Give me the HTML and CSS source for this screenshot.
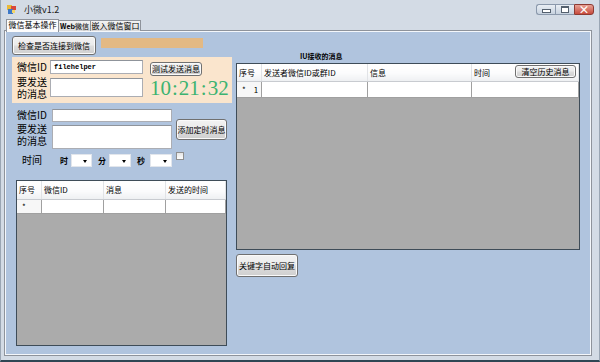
FILE: index.html
```html
<!DOCTYPE html>
<html lang="zh-CN">
<head>
    <meta charset="UTF-8">
    <title>小微v1.2</title>
    <link rel="stylesheet" href="styles.css">
</head>
<body>
    <div class="window">
        <div class="titlebar">
            <svg class="app-icon" width="9" height="9" viewBox="0 0 9 9">
                <rect x="0" y="0" width="5" height="5" fill="#e9b93a"/>
                <rect x="4" y="1" width="5" height="4" fill="#d9483b"/>
                <rect x="1" y="4" width="5" height="5" fill="#3c78c8"/>
                <rect x="5" y="5" width="3" height="3" fill="#f2d46a"/>
            </svg>
            <span class="title">小微v1.2</span>
            <div class="controls">
                <span class="ctl ctl-min"><i></i></span>
                <span class="ctl ctl-max"><i></i></span>
                <span class="ctl ctl-close">×</span>
            </div>
        </div>

        <div class="tabs">
            <span class="tab tab-active">微信基本操作</span>
            <span class="tab tab-web"><b>Web</b>微信</span>
            <span class="tab tab-embed">嵌入微信窗口</span>
        </div>

        <div class="page">
            <div class="left">
                <div class="toolbar">
                    <button class="btn btn-check">检查是否连接到微信</button>
                    <div class="progress"></div>
                </div>

                <div class="send-panel">
                    <label class="lbl lbl-id">微信ID</label>
                    <div class="txt txt-mono">filehelper</div>
                    <button class="btn btn-test">测试发送消息</button>
                    <label class="lbl lbl-multi">要发送<br>的消息</label>
                    <div class="txt txt-msg"></div>
                    <div class="clock">10<span class="colon">:</span>21<span class="colon">:</span>32</div>
                </div>

                <div class="timer-form">
                    <label class="lbl lbl-id">微信ID</label>
                    <div class="txt txt-id"></div>
                    <button class="btn btn-add">添加定时消息</button>
                    <label class="lbl lbl-multi">要发送<br>的消息</label>
                    <div class="txt txt-msg"></div>
                </div>

                <div class="time-row">
                    <span class="lbl lbl-time">时间</span>
                    <span class="unit">时</span>
                    <span class="combo combo-h"></span>
                    <span class="unit">分</span>
                    <span class="combo"></span>
                    <span class="unit">秒</span>
                    <span class="combo combo-s"></span>
                    <span class="check"></span>
                </div>

                <div class="grid grid-left">
                    <table>
                        <tr class="head">
                            <th class="c-no">序号</th>
                            <th class="c-id">微信ID</th>
                            <th class="c-msg">消息</th>
                            <th>发送的时间</th>
                        </tr>
                        <tr class="row">
                            <td class="rowhead">*</td>
                            <td></td>
                            <td></td>
                            <td></td>
                        </tr>
                    </table>
                </div>
            </div>

            <div class="right">
                <div class="caption">IU接收的消息</div>
                <div class="grid grid-right">
                    <table>
                        <tr class="head">
                            <th class="c-no2">序号</th>
                            <th class="c-sender">发送者微信ID或群ID</th>
                            <th class="c-info">信息</th>
                            <th>时间</th>
                        </tr>
                        <tr class="row">
                            <td class="rowhead">*<span class="num">1</span></td>
                            <td></td>
                            <td></td>
                            <td></td>
                        </tr>
                    </table>
                    <button class="btn btn-clear">清空历史消息</button>
                </div>
                <button class="btn btn-reply">关键字自动回复</button>
            </div>
        </div>
    </div>
</body>
</html>
```

FILE: styles.css
```css
body {
    margin: 0;
    padding: 0;
    font-family: "Noto Sans CJK SC", "Liberation Sans", sans-serif;
    background: #d4dce6;
}
.window {
    width: 600px;
    height: 362px;
    box-sizing: border-box;
    display: flex;
    flex-direction: column;
    padding: 0 8px 5px 4px;
    background: #d3dbe5;
    border-left: 1px solid #9aa6b4;
    border-right: 1px solid #9aa6b4;
    border-bottom: 2px solid #2f4654;
    overflow: hidden;
}
.titlebar {
    height: 19px;
    display: flex;
    align-items: center;
    margin-right: -3px;
}
.app-icon {
    margin-left: 2px;
    margin-right: 8px;
}
.title {
    font-size: 9px;
    color: #1a1a1a;
}
.controls {
    margin-left: auto;
    display: flex;
    align-self: flex-start;
    margin-top: 4px;
}
.ctl {
    width: 19px;
    height: 11px;
    box-sizing: border-box;
    border: 1px solid #8a98ab;
    background: linear-gradient(#e9eef4, #c7d2df);
    display: flex;
    align-items: center;
    justify-content: center;
}
.ctl-min, .ctl-max {
    border-right: none;
}
.ctl-min:first-child {
    border-radius: 3px 0 0 3px;
}
.ctl-min i {
    width: 7px;
    height: 2px;
    background: #fff;
    border: 1px solid #54606e;
    margin-top: 3px;
}
.ctl-max i {
    width: 6px;
    height: 4px;
    border: 1px solid #54606e;
    border-top-width: 2px;
    background: #fff;
}
.ctl-close {
    width: 20px;
    border-radius: 0 3px 3px 0;
    border-color: #8d3a32;
    background: linear-gradient(#e8a194, #c74a3c);
    color: #fff;
    font-size: 11px;
    line-height: 9px;
    font-weight: bold;
}

.tabs {
    height: 12px;
    display: flex;
    align-items: flex-end;
    padding-left: 2px;
    position: relative;
    z-index: 1;
}
.tab {
    height: 11px;
    box-sizing: border-box;
    border: 1px solid #8e939b;
    border-bottom: none;
    margin-right: -1px;
    background: linear-gradient(#f3f3f3, #dadada);
    font-size: 8px;
    line-height: 10px;
    text-align: center;
    color: #000;
    white-space: nowrap;
    overflow: hidden;
}
.tab-active {
    width: 53px;
    height: 13px;
    margin-bottom: -1px;
    margin-left: -1px;
    background: #fcfcfc;
}
.tab-web {
    width: 33px;
    font-size: 7px;
}
.tab-embed {
    width: 51px;
}

.page {
    flex: 1;
    display: flex;
    gap: 4px;
    padding: 4px 0 0 6px;
    background: #b0c4de;
    border: 1px solid #f4f7fb;
    outline: 1px solid #8e939b;
}

.left {
    width: 220px;
    display: flex;
    flex-direction: column;
}
.toolbar {
    display: flex;
    align-items: flex-start;
    height: 19px;
}
.progress {
    width: 102px;
    height: 10px;
    margin: 2px 0 0 5px;
    background: #e3b984;
}

.btn {
    padding: 0;
    box-sizing: border-box;
    border: 1px solid #707070;
    border-radius: 3px;
    background: linear-gradient(#f2f2f2 0%, #ebebeb 48%, #dddddd 52%, #cfcfcf 100%);
    box-shadow: inset 0 0 0 1px #fafafa;
    font-family: "Noto Sans CJK SC", sans-serif;
    font-size: 8px;
    line-height: 1;
    color: #000;
    white-space: nowrap;
}
.btn-check {
    width: 84px;
    height: 19px;
}

.lbl {
    font-size: 10px;
    line-height: 12px;
    color: #000;
    white-space: nowrap;
}
.lbl-id {
    grid-column: 1;
    grid-row: 1;
}
.lbl-multi {
    grid-column: 1;
    grid-row: 2;
    line-height: 12px;
    margin-top: -2px;
}
.txt {
    box-sizing: border-box;
    background: #fff;
    border: 1px solid #abadb3;
    border-top-color: #8f949b;
    grid-column: 2;
}
.txt-msg {
    grid-row: 2;
}
.txt-mono {
    grid-row: 1;
    font-family: "Liberation Mono", monospace;
    font-size: 7px;
    font-weight: bold;
    line-height: 12px;
    padding-left: 3px;
}

.send-panel {
    margin-top: 2px;
    height: 46px;
    box-sizing: border-box;
    background: #fae5cd;
    padding: 3px 0 0 5px;
    display: grid;
    grid-template-columns: 33px 93px 7px 80px;
    grid-template-rows: 14px 19px;
    row-gap: 4px;
}
.send-panel .lbl-id {
    margin-top: 1px;
}
.btn-test {
    grid-column: 4;
    grid-row: 1;
    width: 52px;
    height: 14px;
    margin-top: 2px;
}
.clock {
    grid-column: 4;
    grid-row: 2;
    font-family: "Liberation Serif", serif;
    font-size: 21px;
    line-height: 19px;
    color: #3cb371;
    white-space: nowrap;
    margin-top: 1px;
}
.colon {
    margin: 0 1px;
}

.timer-form {
    margin-top: 6px;
    padding-left: 5px;
    display: grid;
    grid-template-columns: 35px 120px 4px 51px;
    grid-template-rows: 13px 24px;
    row-gap: 3px;
}
.txt-id {
    grid-row: 1;
}
.btn-add {
    grid-column: 4;
    grid-row: 1 / 3;
    align-self: center;
    height: 21px;
    margin-top: 1px;
}

.time-row {
    margin-top: 4px;
    height: 14px;
    display: flex;
    align-items: center;
    padding-left: 10px;
}
.lbl-time {
    width: 38px;
}
.unit {
    font-size: 8px;
    font-weight: bold;
    width: 8px;
    margin-right: 3px;
}
.combo {
    width: 22px;
    height: 13px;
    box-sizing: border-box;
    background: #fff;
    border: 1px solid #e2e6ec;
    margin-right: 6px;
    position: relative;
}
.combo::after {
    content: "";
    position: absolute;
    right: 4px;
    top: 5px;
    border-left: 2px solid transparent;
    border-right: 2px solid transparent;
    border-top: 3px solid #000;
}
.combo-h {
    width: 21px;
}
.combo-s {
    margin-left: 2px;
    margin-right: 4px;
}
.check {
    width: 8px;
    height: 8px;
    box-sizing: border-box;
    border: 1px solid #8f8f8f;
    background: linear-gradient(#e6e6e6, #fdfdfd);
    align-self: flex-start;
    margin-top: -1px;
}

.grid {
    box-sizing: border-box;
    background: #ababab;
    border: 1px solid #3e4c58;
    position: relative;
}
.grid table {
    width: 100%;
    border-collapse: collapse;
    table-layout: fixed;
}
.grid th {
    text-align: left;
    font-weight: normal;
    font-size: 8px;
    padding: 0 0 0 2px;
    white-space: nowrap;
    background: linear-gradient(#ffffff 0%, #fbfbfc 55%, #eef0f2 100%);
    border-right: 1px solid #e1e3e6;
    border-bottom: 1px solid #c8cbd0;
}
.grid td {
    background: #fff;
    border-right: 1px solid #a0a0a0;
    border-bottom: 1px solid #a0a0a0;
    font-size: 8px;
    padding: 0 0 0 5px;
}
.grid td.rowhead {
    background: #f7f7f7;
}
.grid-left {
    margin-top: 13px;
    margin-left: 4px;
    width: 211px;
    height: 166px;
}
.grid-left .head {
    height: 18px;
}
.grid-left .row {
    height: 14px;
}
.c-no {
    width: 22px;
}
.c-id {
    width: 59px;
}
.c-msg {
    width: 59px;
}

.right {
    width: 344px;
    display: flex;
    flex-direction: column;
}
.caption {
    height: 13px;
    padding-top: 14px;
    padding-left: 64px;
    font-size: 7px;
    font-weight: bold;
    line-height: 12px;
}
.grid-right {
    width: 344px;
    height: 187px;
}
.grid-right .head {
    height: 17px;
}
.grid-right .row {
    height: 16px;
}
.c-no2 {
    width: 22px;
}
.c-sender {
    width: 103px;
}
.c-info {
    width: 101px;
}
.num {
    margin-left: 8px;
}
.btn-clear {
    position: absolute;
    left: 278px;
    top: 1px;
    width: 61px;
    height: 13px;
}
.btn-reply {
    margin-top: 4px;
    width: 62px;
    height: 23px;
}
```
